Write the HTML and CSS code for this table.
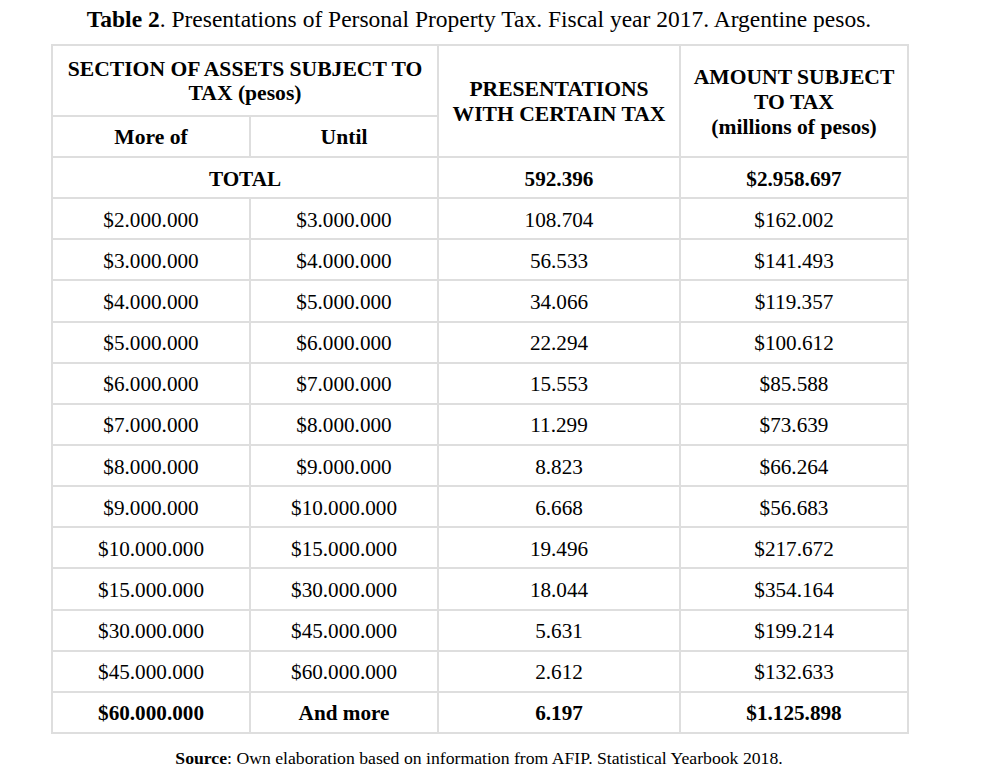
FILE: index.html
```html
<!DOCTYPE html>
<html>
<head>
<meta charset="utf-8">
<link rel="stylesheet" href="styles.css">
</head>
<body>
<div class="page">
  <p class="title"><b>Table 2</b>. Presentations of Personal Property Tax. Fiscal year 2017. Argentine pesos.</p>
  <table class="tax">
    <colgroup>
      <col class="c1"><col class="c2"><col class="c3"><col class="c4">
    </colgroup>
    <thead>
      <tr class="h1">
        <th colspan="2">SECTION OF ASSETS SUBJECT TO<br>TAX (pesos)</th>
        <th rowspan="2" class="pres">PRESENTATIONS<br>WITH CERTAIN TAX</th>
        <th rowspan="2" class="amt">AMOUNT SUBJECT<br>TO TAX<br>(millions of pesos)</th>
      </tr>
      <tr class="h2">
        <th>More of</th>
        <th>Until</th>
      </tr>
    </thead>
    <tbody>
      <tr class="bold"><td colspan="2">TOTAL</td><td>592.396</td><td>$2.958.697</td></tr>
      <tr><td>$2.000.000</td><td>$3.000.000</td><td>108.704</td><td>$162.002</td></tr>
      <tr><td>$3.000.000</td><td>$4.000.000</td><td>56.533</td><td>$141.493</td></tr>
      <tr><td>$4.000.000</td><td>$5.000.000</td><td>34.066</td><td>$119.357</td></tr>
      <tr><td>$5.000.000</td><td>$6.000.000</td><td>22.294</td><td>$100.612</td></tr>
      <tr><td>$6.000.000</td><td>$7.000.000</td><td>15.553</td><td>$85.588</td></tr>
      <tr><td>$7.000.000</td><td>$8.000.000</td><td>11.299</td><td>$73.639</td></tr>
      <tr><td>$8.000.000</td><td>$9.000.000</td><td>8.823</td><td>$66.264</td></tr>
      <tr><td>$9.000.000</td><td>$10.000.000</td><td>6.668</td><td>$56.683</td></tr>
      <tr><td>$10.000.000</td><td>$15.000.000</td><td>19.496</td><td>$217.672</td></tr>
      <tr><td>$15.000.000</td><td>$30.000.000</td><td>18.044</td><td>$354.164</td></tr>
      <tr><td>$30.000.000</td><td>$45.000.000</td><td>5.631</td><td>$199.214</td></tr>
      <tr><td>$45.000.000</td><td>$60.000.000</td><td>2.612</td><td>$132.633</td></tr>
      <tr class="bold"><td>$60.000.000</td><td>And more</td><td>6.197</td><td>$1.125.898</td></tr>
    </tbody>
  </table>
  <p class="source"><b>Source</b>: Own elaboration based on information from AFIP. Statistical Yearbook 2018.</p>
</div>
</body>
</html>
```

FILE: styles.css
```css
html, body {
  margin: 0;
  padding: 0;
  background: #fff;
}
body {
  font-family: "Liberation Serif", "Times New Roman", serif;
  color: #000;
}
.page {
  width: 856px;
  margin-left: 51px;
  padding-top: 5px;
}
.title {
  margin: 0;
  text-align: center;
  font-size: 23.5px;
  line-height: 28px;
  height: 39px;
}
.tax {
  border-collapse: collapse;
  width: 856px;
  table-layout: fixed;
  font-size: 21.2px;
}
.c1 { width: 198px; }
.c2 { width: 188px; }
.c3 { width: 242px; }
.c4 { width: 228px; }
.tax th, .tax td {
  border: 2px solid #dedede;
  text-align: center;
  vertical-align: middle;
  padding: 0;
  line-height: 24px;
}
.tax th {
  font-weight: bold;
  font-size: 21.6px;
}
.h1 th { height: 68px; }
.h1 th[colspan] { line-height: 24px; padding-top: 1px; }
.h1 th.pres { line-height: 25px; padding-top: 2px; }
.h1 th.amt { line-height: 25px; padding-top: 2px; }
.h2 th { height: 39px; }
.tax td {
  height: 37.15px;
  padding-top: 2px;
}
.bold td { font-weight: bold; }
.source {
  margin: 14px 0 0;
  text-align: center;
  font-size: 17.7px;
  line-height: 20px;
}
```
